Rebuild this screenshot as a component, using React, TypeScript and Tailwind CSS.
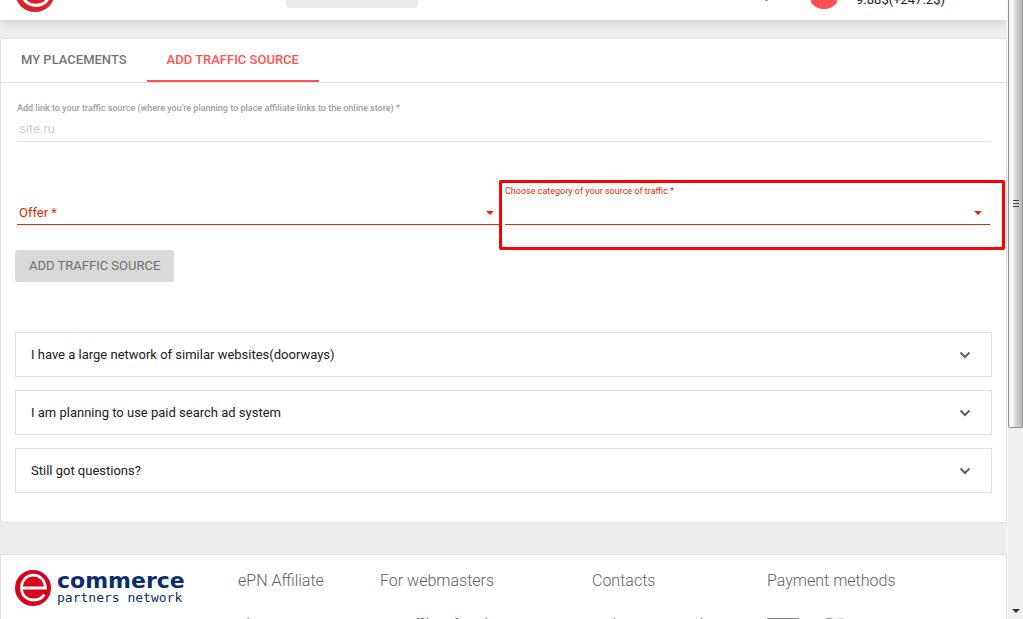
import { useState } from "react";
import clsx from "clsx";

const tabs = ["My placements", "Add traffic source"];

const questions = [
  {
    title: "I have a large network of similar websites(doorways)",
    answer: "Add one of the websites and send us the full list.",
  },
  {
    title: "I am planning to use paid search ad system",
    answer: "Please read the rules of the offer first.",
  },
  {
    title: "Still got questions?",
    answer: "Contact our support team.",
  },
];

const footerColumns = [
  { title: "ePN Affiliate", link: "About us" },
  { title: "For webmasters", link: "ePN affiliate for ads" },
  { title: "Contacts", link: "Tech support email" },
];

function LogoMark({ className }: { className?: string }) {
  return (
    <svg viewBox="0 0 36 36" className={className} aria-hidden="true">
      <circle cx="18" cy="18" r="18" fill="currentColor" />
      <path
        d="M6.5 18H30.500C30 10 25 5.200 18.500 5.200C11.500 5.200 6.500 10.800 6.500 18C6.500 25.300 11.800 30 18.700 30C23.500 30 27.300 28 29.300 24.500"
        fill="none"
        stroke="#fff"
        strokeWidth="2.800"
      />
    </svg>
  );
}

function Caret() {
  return (
    <svg
      viewBox="0 0 8 4"
      className="pointer-events-none absolute right-2 bottom-2.5 h-1 w-2 text-[#dd2c00]"
      aria-hidden="true"
    >
      <path d="M0 0h8L4 4z" fill="currentColor" />
    </svg>
  );
}

function Header() {
  return (
    <header className="relative z-10 flex h-5 items-end overflow-hidden bg-white pr-[62px] pl-[15px] shadow-[0_2px_10px_rgba(0,0,0,0.14)]">
      <a href="#" aria-label="Home" className="shrink-0 pb-2">
        <LogoMark className="size-10 text-[#e01f26]" />
      </a>
      <div className="pb-3 pl-[231px]">
        <div className="h-8 w-[132px] rounded bg-[#ebebeb]" />
      </div>
      <div className="ml-auto flex items-end">
        <span className="mr-10 mb-[19px] size-[3px] rounded-full bg-[#757575]" />
        <svg viewBox="0 0 32 32" className="mr-4 mb-[11px] size-8" aria-hidden="true">
          <circle cx="16" cy="16" r="16" fill="#ff9c9c" />
          <path
            d="M2.800 25.200C5 21 10 19 16 19S27 21 29.200 25.200A16 16 0 0 1 2.800 25.200z"
            fill="#ff5252"
          />
        </svg>
        <span className="pb-2.5 text-[13px] leading-5 text-[#212121]">
          9.88$(+247.2$)
        </span>
      </div>
    </header>
  );
}

function Tabs() {
  const [active, setActive] = useState(1);

  return (
    <div className="flex border-b border-[#e0e0e0]">
      {tabs.map((tab, index) => (
        <button
          key={tab}
          type="button"
          onClick={() => setActive(index)}
          className={clsx(
            "h-[43px] border-b-2 px-5 text-[13px] font-medium uppercase",
            index === active
              ? "border-[#ff5252] text-[#ff5252]"
              : "border-transparent text-[#757575]"
          )}
        >
          {tab}
        </button>
      ))}
    </div>
  );
}

function SourceForm() {
  return (
    <form onSubmit={(e) => e.preventDefault()}>
      <div className="px-4 pt-[18px]">
        <label
          htmlFor="link"
          className="block text-[9px] leading-[14px] font-medium text-[#9e9e9e]"
        >
          Add link to your traffic source (where you're planning to place
          affiliate links to the online store) *
        </label>
        <input
          id="link"
          type="text"
          placeholder="site.ru"
          className="block h-[27px] w-full border-b border-[#e0e0e0] px-0.5 text-[13px] outline-none placeholder:text-[#cfcfcf]"
        />
      </div>

      <div className="mt-[42px] grid grid-cols-2 items-end gap-[3px] px-4">
        <div className="relative">
          <label htmlFor="offer" className="sr-only">
            Offer
          </label>
          <select
            id="offer"
            className="block h-[27px] w-full appearance-none border-b border-[#dd2c00] bg-transparent px-0.5 pt-1 text-[13px] text-[#dd2c00] outline-none"
          >
            <option>Offer *</option>
          </select>
          <Caret />
        </div>

        <div className="relative">
          <label
            htmlFor="category"
            className="block text-[9px] leading-[14px] text-[#dd2c00]"
          >
            Choose category of your source of traffic *
          </label>
          <select
            id="category"
            className="block h-[27px] w-full appearance-none border-b border-[#dd2c00] bg-transparent px-0.5 text-[13px] text-[#dd2c00] outline-none"
          >
            <option></option>
          </select>
          <Caret />
          <div className="pointer-events-none absolute -top-1 -right-[15px] -bottom-[25px] -left-1.5 rounded-xs border-3 border-[#ff0000]" />
        </div>
      </div>

      <div className="px-3.5 pt-[25px]">
        <button
          type="submit"
          className="h-8 rounded-[3px] bg-[#d9d9d9] px-3.5 text-[13px] text-[#6f6f6f] uppercase"
        >
          Add traffic source
        </button>
      </div>
    </form>
  );
}

function Questions() {
  const [open, setOpen] = useState<number | null>(null);

  return (
    <div className="flex flex-col gap-[13px] px-3.5 pt-[50px] pb-[29px]">
      {questions.map((question, index) => (
        <div key={question.title} className="border border-[#e0e0e0]">
          <button
            type="button"
            aria-expanded={open === index}
            onClick={() => setOpen(open === index ? null : index)}
            className="flex h-[43px] w-full items-center justify-between pr-5 pl-[15px] text-left text-[13px] text-[#212121]"
          >
            {question.title}
            <svg
              viewBox="0 0 12 8"
              className="h-2 w-3 text-[#616161]"
              aria-hidden="true"
            >
              <path
                d="M1.500 1.500L6 6L10.500 1.500"
                fill="none"
                stroke="currentColor"
                strokeWidth="2"
              />
            </svg>
          </button>
          {open === index && (
            <p className="px-[15px] pb-4 text-[13px]">{question.answer}</p>
          )}
        </div>
      ))}
    </div>
  );
}

function Footer() {
  return (
    <footer className="mt-[31px] grid grid-cols-[223px_142px_212px_175px_1fr] border border-[#e0e0e0] bg-white pt-[15px] pb-10 pl-3.5">
      <a href="#" className="flex items-start">
        <LogoMark className="size-9 text-[#d9001b]" />
        <span className="ml-1.5 flex flex-col font-['DejaVu_Sans'] text-[#0b2d6b]">
          <span className="text-[22px] leading-[22px] font-bold">commerce</span>
          <span className="font-['DejaVu_Sans_Mono'] text-[13px] leading-3">
            partners network
          </span>
        </span>
      </a>
      {footerColumns.map((column) => (
        <div key={column.title}>
          <h3 className="text-base leading-[22px] font-light text-[#616161]">
            {column.title}
          </h3>
          <a
            href="#"
            className="mt-[22px] block text-[13px] leading-5 whitespace-nowrap text-[#3f5570]"
          >
            {column.link}
          </a>
        </div>
      ))}
      <div>
        <h3 className="text-base leading-[22px] font-light text-[#616161]">
          Payment methods
        </h3>
        <div className="mt-[26px] flex items-start">
          <span className="h-5 w-8 bg-[#8a8a8a]" />
          <span className="ml-5 size-5 rounded-full bg-[#8a8a8a]" />
          <span className="-ml-2 size-5 rounded-full bg-[#c9c9c9]" />
        </div>
      </div>
    </footer>
  );
}

function Scrollbar() {
  return (
    <div
      className="flex w-4 shrink-0 flex-col border-l border-[#f7f7f7] bg-[#efefef]"
      aria-hidden="true"
    >
      <div className="flex h-[428px] items-center justify-center rounded-b-xs border border-t-0 border-[#8f8f8f] bg-linear-to-r from-[#f8f8f8] from-30% via-[#d6d6d8] via-50% to-[#b9b9bc]">
        <div className="mb-5 flex flex-col gap-0.5">
          <span className="h-px w-1.5 bg-[#444]" />
          <span className="h-px w-1.5 bg-[#444]" />
          <span className="h-px w-1.5 bg-[#444]" />
        </div>
      </div>
      <svg viewBox="0 0 8 4" className="mx-auto mt-auto mb-1.5 h-1 w-2">
        <path d="M0 0h8L4 4z" fill="#333" />
      </svg>
    </div>
  );
}

export default function App() {
  return (
    <div className="flex h-screen overflow-hidden bg-[#ededed] font-['Roboto',sans-serif]">
      <div className="min-w-0 flex-1 overflow-hidden">
        <Header />
        <main className="mt-[18px] rounded-xs border border-[#e0e0e0] bg-white">
          <Tabs />
          <SourceForm />
          <Questions />
        </main>
        <Footer />
      </div>
      <Scrollbar />
    </div>
  );
}
